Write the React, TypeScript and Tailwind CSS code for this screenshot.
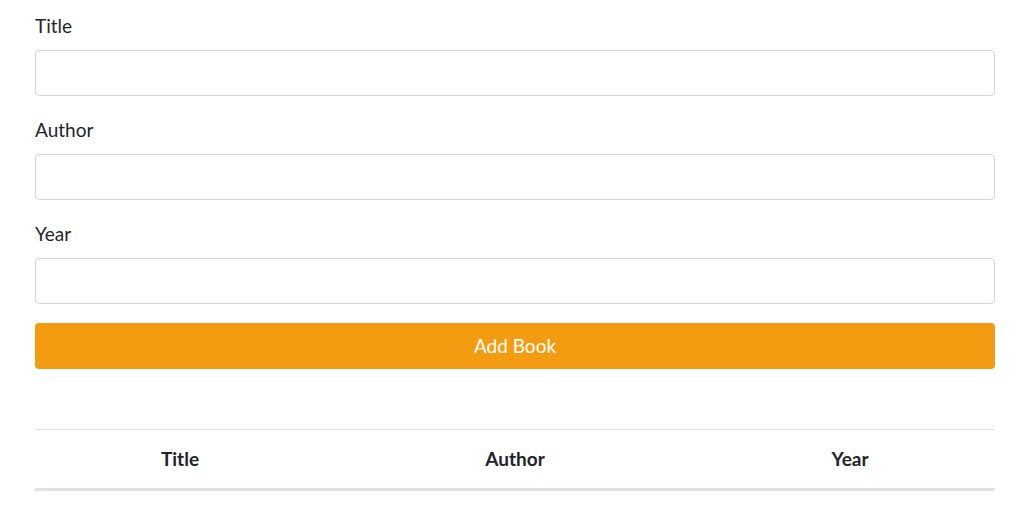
import React from "react";

export default function App() {
  const fields = ["Title", "Author", "Year"];
  return (
    <div className="min-h-screen bg-white text-[#212529]" style={{ fontFamily: "Lato, 'Noto Sans', sans-serif" }}>
      <div className="mx-[35px] w-[960px] pt-[12px]">
        {fields.map((f, i) => (
          <div key={f} className={i === 2 ? "mb-[19px]" : "mb-[20px]"}>
            <label className="block text-[19px] leading-[27px] mb-[11px]">{f}</label>
            <input className="block w-full h-[46px] rounded-[4px] border border-[#ced4da] bg-white px-3 text-[19px] outline-none" />
          </div>
        ))}
        <button className="block w-full h-[46px] rounded-[4px] bg-[#f39c12] text-white text-[19px]">Add Book</button>
        <div className="mt-[60px] border-t border-[#dee2e6] border-b-[3px] border-b-[#dee2e6] grid grid-cols-[290px_380px_290px] h-[62px] items-center text-[19px] font-bold">
          <div className="text-center">Title</div>
          <div className="text-center">Author</div>
          <div className="text-center">Year</div>
        </div>
      </div>
    </div>
  );
}
